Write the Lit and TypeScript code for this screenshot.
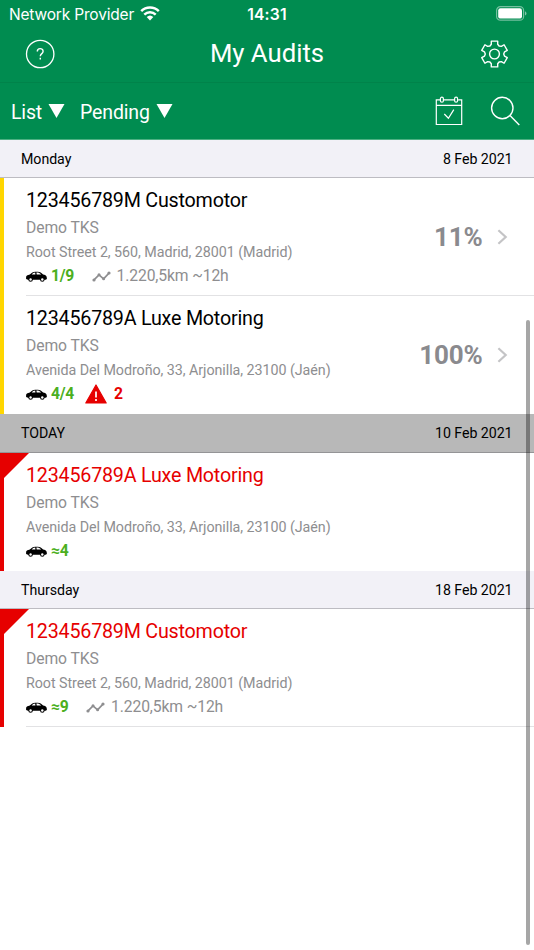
import { LitElement, html, css, nothing } from "lit";
import { customElement, property } from "lit/decorators.js";
import { classMap } from "lit/directives/class-map.js";

interface Audit {
  title: string;
  client: string;
  address: string;
  cars: string;
  route?: string;
  alerts?: number;
  progress?: string;
  overdue?: boolean;
  divider?: boolean;
}

interface Day {
  label: string;
  date: string;
  today?: boolean;
  audits: Audit[];
}

const MADRID = "Root Street 2, 560, Madrid, 28001 (Madrid)";
const JAEN = "Avenida Del Modroño, 33, Arjonilla, 23100 (Jaén)";

const DAYS: Day[] = [
  {
    label: "Monday",
    date: "8 Feb 2021",
    audits: [
      { title: "123456789M Customotor", client: "Demo TKS", address: MADRID, cars: "1/9", route: "1.220,5km ~12h", progress: "11%", divider: true },
      { title: "123456789A Luxe Motoring", client: "Demo TKS", address: JAEN, cars: "4/4", alerts: 2, progress: "100%" },
    ],
  },
  {
    label: "TODAY",
    date: "10 Feb 2021",
    today: true,
    audits: [{ title: "123456789A Luxe Motoring", client: "Demo TKS", address: JAEN, cars: "≈4", overdue: true }],
  },
  {
    label: "Thursday",
    date: "18 Feb 2021",
    audits: [{ title: "123456789M Customotor", client: "Demo TKS", address: MADRID, cars: "≈9", route: "1.220,5km ~12h", overdue: true, divider: true }],
  },
];

/* Six-toothed cog outline centred on the origin. */
const gearPath = (): string => {
  const pts: string[] = [];
  for (let i = 0; i < 6; i++) {
    const steps: [number, number][] = [[-14, 13.3], [14, 13.3], [18, 10.3], [30, 9.2], [42, 10.3]];
    for (const [deg, r] of steps) {
      const a = ((i * 60 + deg - 90) * Math.PI) / 180;
      pts.push(`${(r * Math.cos(a)).toFixed(2)} ${(r * Math.sin(a)).toFixed(2)}`);
    }
  }
  return `M${pts.join("L")}Z`;
};

const wifiIcon = html`<svg class="wifi" width="20" height="15" viewBox="0 0 20 15">
  <g fill="none" stroke="#fff" stroke-width="2.5">
    <path d="M1.2 5.2a12.6 12.6 0 0 1 17.6 0" />
    <path d="M4.3 8.6a8.2 8.2 0 0 1 11.4 0" />
  </g>
  <path fill="#fff" d="M10 14.4 6.7 11a4.8 4.8 0 0 1 6.6 0Z" />
</svg>`;

const batteryIcon = html`<svg class="battery" width="31" height="15" viewBox="0 0 31 15">
  <rect x=".6" y=".6" width="27" height="13.6" rx="3.8" fill="none" stroke="#fff" stroke-opacity=".45" stroke-width="1.2" />
  <rect x="2.2" y="2.2" width="23.8" height="10.4" rx="2.2" fill="#fff" />
  <path d="M29 5.2c2 .8 2 3.6 0 4.4Z" fill="#fff" fill-opacity=".5" />
</svg>`;

const helpIcon = html`<svg width="30" height="30" viewBox="0 0 30 30" fill="none" stroke="#fff" stroke-width="1.3">
  <circle cx="15.2" cy="15" r="13.7" />
  <path d="M12.3 12.6c0-4 5.8-3.8 5.8-.3 0 2.4-2.8 2.3-2.8 5M15.3 18.7v1.8" stroke-width="1.4" />
</svg>`;

const gearIcon = html`<svg width="30" height="30" viewBox="-15.5 -15 30 30" fill="none" stroke="#fff" stroke-width="1.4" stroke-linejoin="round">
  <path d=${gearPath()} />
  <circle r="4.9" />
</svg>`;

const calendarIcon = html`<svg width="28" height="30" viewBox="0 0 28 30" fill="none" stroke="#fff" stroke-width="1.2">
  <path d="M5 3.9H1.3v24.6h25.4V3.9h-3.5M8.7 3.9h10.7M1.3 9.3h25.4" />
  <rect x="5.4" y="1.2" width="3" height="5" rx="1.5" />
  <rect x="19.6" y="1.2" width="3" height="5" rx="1.5" />
  <path d="m9.3 18 4.1 4.2 5.4-8.6" />
</svg>`;

const searchIcon = html`<svg width="30" height="30" viewBox="0 0 30 30" fill="none" stroke="#fff" stroke-width="1.4">
  <circle cx="12.3" cy="12" r="10.7" />
  <path d="m20 19.6 9.3 9.5" />
</svg>`;

const triangleIcon = html`<svg width="17" height="14" viewBox="0 0 17 14"><path d="M.5 0h16L8.5 14Z" fill="#fff" /></svg>`;

const carIcon = html`<svg class="car" width="21" height="11" viewBox="0 0 21 11">
  <path d="M.1 6.2C.2 4.900 1 4.300 2.300 4L3.800 3.500C5.500 1.900 7 .8 9.200.7h2.600c2.200 0 3.900 1.200 5.300 2.700 1.800.4 3.300 1 3.600 2.500L20.900 8l-1.200.8H2L.1 8Z" />
  <path d="M5.700 3.600C6.700 2.400 7.700 1.700 9.200 1.600l.2 2ZM10.400 1.600h1.300c1.500.1 2.500.9 3.400 2h-4.400Z" fill="#fff" />
  <circle cx="4.600" cy="8.500" r="2.300" /><circle cx="16.300" cy="8.500" r="2.300" />
  <circle cx="4.600" cy="8.500" r="1.200" fill="#fff" /><circle cx="16.300" cy="8.500" r="1.200" fill="#fff" />
</svg>`;

const routeIcon = html`<svg class="route-icon" width="19" height="11" viewBox="0 0 19 11">
  <path d="m2 8.900 5-5 4.600 4L17 2.200" fill="none" stroke="#8e8e90" stroke-width="1.700" />
  <g fill="#8e8e90"><circle cx="2" cy="9" r="1.600" /><circle cx="7" cy="3.700" r="1.500" /><circle cx="11.600" cy="7.800" r="1.500" /><circle cx="17" cy="2" r="1.600" /></g>
</svg>`;

const alertIcon = html`<svg class="alert-icon" width="22" height="20" viewBox="0 0 22 20">
  <path d="M11 1 21.200 19H.8Z" fill="#e60000" stroke="#e60000" stroke-width="1.200" stroke-linejoin="round" />
  <path d="M11 7.500v6M11 15v2" stroke="#fff" stroke-width="1.700" />
</svg>`;

const chevronIcon = html`<svg class="chevron" width="11" height="16" viewBox="0 0 11 16">
  <path d="m1.400 1.300 7.300 6.700-7.300 6.700" fill="none" stroke="#c4c4c6" stroke-width="2.200" />
</svg>`;

@customElement("audit-row")
export class AuditRow extends LitElement {
  @property({ attribute: false }) audit!: Audit;

  static styles = css`
    :host { display: block; }
    svg { display: block; flex: none; }
    .row {
      position: relative;
      box-sizing: border-box;
      display: flex;
      height: 118px;
      border-left: 4px solid #ffd600;
    }
    .row.overdue { border-left-color: #e60000; }
    .corner {
      position: absolute;
      left: 0;
      top: 0;
      width: 25px;
      height: 25px;
      background: #e60000;
      clip-path: polygon(0 0, 100% 0, 0 100%);
    }
    .body {
      flex: 1;
      box-sizing: border-box;
      display: flex;
      margin-left: 22px;
      padding-top: 9px;
      border-bottom: 1px solid transparent;
    }
    .divider .body { border-bottom-color: #e2e2e4; }
    .info { flex: 1; white-space: nowrap; color: #8e8e90; }
    .title { font-size: 19.7px; letter-spacing: -0.21px; line-height: 28px; color: #000; }
    .overdue .title { color: #e60000; }
    .client { font-size: 15.7px; letter-spacing: -0.1px; line-height: 26px; }
    .address { font-size: 14.3px; letter-spacing: -0.06px; line-height: 22px; }
    .facts { display: flex; align-items: center; height: 24px; padding-top: 1px; font-size: 15.7px; }
    .facts span { padding-bottom: 1px; }
    .cars { margin-left: 4px; font-weight: 700; color: #4caf1e; letter-spacing: -0.25px; }
    .route-icon { margin-left: 17.5px; }
    .route { margin-left: 6px; letter-spacing: -0.13px; }
    .alert-icon { margin-left: 11px; margin-bottom: 1px; }
    .alerts { margin-left: 7px; font-weight: 700; color: #e60000; }
    .progress {
      display: flex;
      align-items: center;
      height: 100px;
      padding-right: 26px;
      font-size: 26px;
      font-weight: 700;
      letter-spacing: -0.2px;
      color: #8a8a8e;
    }
    .chevron { margin-left: 14.5px; }
  `;

  render() {
    const a = this.audit;
    return html`<div class=${classMap({ row: true, overdue: !!a.overdue, divider: !!a.divider })}>
      ${a.overdue ? html`<div class="corner"></div>` : nothing}
      <div class="body">
        <div class="info">
          <div class="title">${a.title}</div>
          <div class="client">${a.client}</div>
          <div class="address">${a.address}</div>
          <div class="facts">
            ${carIcon}<span class="cars">${a.cars}</span>
            ${a.route ? html`${routeIcon}<span class="route">${a.route}</span>` : nothing}
            ${a.alerts ? html`${alertIcon}<span class="alerts">${a.alerts}</span>` : nothing}
          </div>
        </div>
        ${a.progress ? html`<div class="progress"><span>${a.progress}</span>${chevronIcon}</div>` : nothing}
      </div>
    </div>`;
  }
}

@customElement("app-root")
export class AppRoot extends LitElement {
  static styles = css`
    :host {
      display: block;
      position: relative;
      height: 950px;
      overflow: hidden;
      background: #fff;
      font-family: Roboto, "Liberation Sans", sans-serif;
      color: #000;
    }
    svg { display: block; flex: none; }
    .top { background: #008c50; color: #fff; }
    .status {
      display: grid;
      grid-template-columns: 1fr auto 1fr;
      align-items: center;
      height: 26px;
      padding: 0 7px 0 9px;
      font-family: Inter, Roboto, sans-serif;
      font-size: 15.5px;
    }
    .carrier { display: flex; align-items: center; gap: 6px; white-space: nowrap; letter-spacing: -0.18px; }
    .carrier span, .clock { padding-top: 2px; }
    .clock { margin-right: 2px; font-weight: 600; font-size: 15.7px; letter-spacing: 0.2px; }
    .battery { justify-self: end; }
    .nav {
      display: grid;
      grid-template-columns: 1fr auto 1fr;
      align-items: center;
      box-sizing: border-box;
      height: 57px;
      padding: 0 25px;
      border-bottom: 1px solid #00834a;
    }
    .heading { font-size: 25.7px; padding-bottom: 2px; }
    .end { justify-self: end; }
    .tools {
      box-sizing: border-box;
      display: flex;
      align-items: center;
      height: 57px;
      padding: 0 14px 0 11px;
      border-bottom: 1px solid #4db083;
      font-size: 19.5px;
    }
    .filter { display: flex; align-items: center; gap: 6px; }
    .filter + .filter { margin-left: 15px; }
    .filter span { letter-spacing: -0.15px; padding-top: 2px; }
    .actions { display: flex; gap: 27px; margin-left: auto; }
    .day {
      box-sizing: border-box;
      display: flex;
      justify-content: space-between;
      align-items: center;
      height: 38px;
      padding: 1px 21.5px 0 21px;
      background: #f2f1f7;
      border-bottom: 1px solid #bdbcc2;
      font-size: 14.2px;
      letter-spacing: -0.05px;
    }
    .day.today { height: 39px; padding-top: 0; background: #b8b8b8; border-bottom-color: #949496; }
    .scrollbar {
      position: absolute;
      left: 526px;
      top: 320px;
      width: 4px;
      height: 625px;
      border-radius: 2px;
      background: rgba(0, 0, 0, 0.35);
    }
  `;

  render() {
    return html`
      <div class="top">
        <div class="status">
          <div class="carrier"><span>Network Provider</span>${wifiIcon}</div>
          <div class="clock">14:31</div>
          ${batteryIcon}
        </div>
        <div class="nav">
          ${helpIcon}
          <div class="heading">My Audits</div>
          <div class="end">${gearIcon}</div>
        </div>
        <div class="tools">
          <div class="filter"><span>List</span>${triangleIcon}</div>
          <div class="filter"><span>Pending</span>${triangleIcon}</div>
          <div class="actions">${calendarIcon}${searchIcon}</div>
        </div>
      </div>
      ${DAYS.map(
        (d) => html`<div class=${classMap({ day: true, today: !!d.today })}><span>${d.label}</span><span>${d.date}</span></div>
          ${d.audits.map((a) => html`<audit-row .audit=${a}></audit-row>`)}`
      )}
      <div class="scrollbar"></div>
    `;
  }
}
